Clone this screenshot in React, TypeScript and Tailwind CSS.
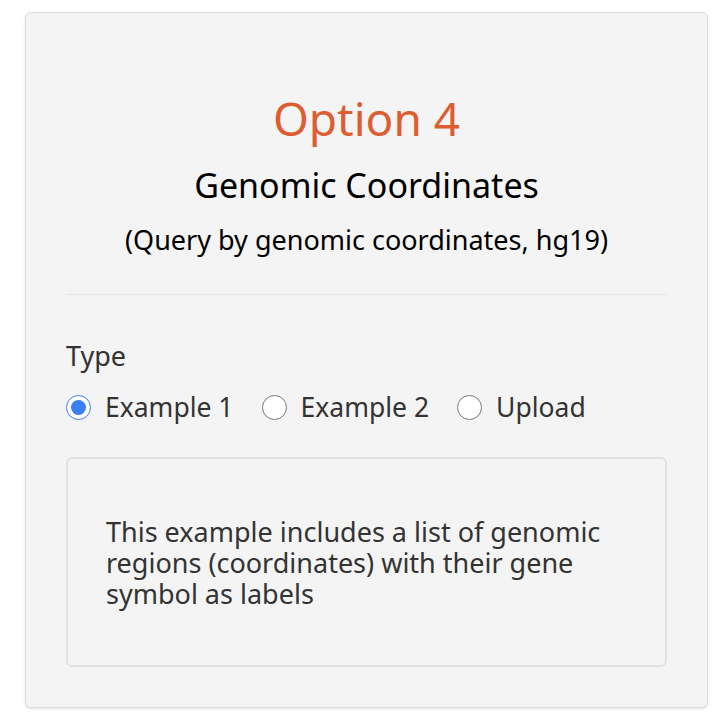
import { useState } from 'react';

const options = ['Example 1', 'Example 2', 'Upload'];

export default function App() {
  const [type, setType] = useState('Example 1');

  return (
    <div className="min-h-screen bg-white pt-3 pl-[25px] pr-[14px] font-['Noto_Sans',sans-serif]">
      <div className="rounded-md border border-[#dedede] bg-[#f4f4f4] px-10 pt-[77px] pb-10 shadow-sm">
        <div className="text-center">
          <h2 className="text-[46px] leading-[56px] text-[#dd5d33]">Option 4</h2>
          <h3 className="mt-[17px] text-[34px] leading-[44px] text-black">Genomic Coordinates</h3>
          <p className="mt-[15px] text-[27px] leading-9 text-black">(Query by genomic coordinates, hg19)</p>
        </div>

        <hr className="mt-9 border-t border-[#e6e6e6]" />

        <div className="mt-[44px] text-[27px] leading-[34px] text-[#333]">Type</div>
        <div className="mt-4 flex items-center gap-[28px] text-[26.5px] leading-9 text-[#333]">
          {options.map((o) => (
            <label key={o} className="flex items-center gap-[14px] cursor-pointer">
              <input
                type="radio"
                name="type"
                checked={type === o}
                onChange={() => setType(o)}
                className="m-0 h-[25px] w-[25px] accent-[#3b7ff5]"
              />
              {o}
            </label>
          ))}
        </div>

        <div className="mt-8 flex h-[210px] items-center rounded-md border-2 border-[#e2e2e2] px-[38px]">
          <p className="text-[27px] leading-[31px] text-[#333]">
            This example includes a list of genomic regions (coordinates) with their gene symbol as labels
          </p>
        </div>
      </div>
    </div>
  );
}
